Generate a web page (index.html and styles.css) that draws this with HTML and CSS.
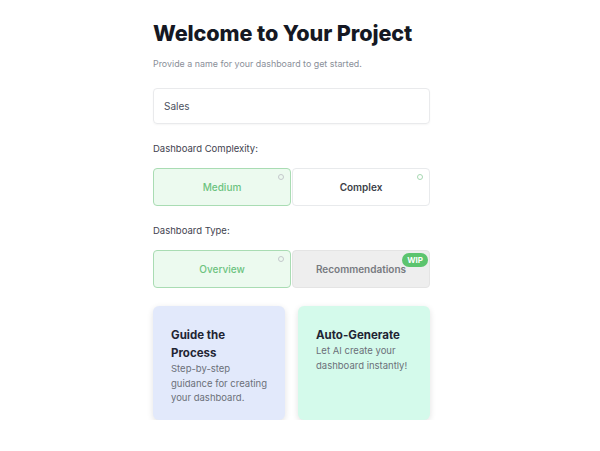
FILE: index.html
```html
<!DOCTYPE html>
<html>
<head>
<meta charset="utf-8">
<link rel="stylesheet" href="styles.css">
</head>
<body>
<main class="wrap">
  <h1 class="title">Welcome to Your Project</h1>
  <p class="subtitle">Provide a name for your dashboard to get started.</p>
  <div class="input">Sales</div>

  <p class="label">Dashboard Complexity:</p>
  <div class="options">
    <div class="opt selected"><span class="dot"></span>Medium</div>
    <div class="opt"><span class="dot green"></span>Complex</div>
  </div>

  <p class="label">Dashboard Type:</p>
  <div class="options">
    <div class="opt selected"><span class="dot"></span>Overview</div>
    <div class="opt disabled"><span class="wip">WIP</span>Recommendations</div>
  </div>

  <div class="cards">
    <div class="card guide">
      <h2 class="card-title">Guide the<br>Process</h2>
      <p class="card-desc">Step-by-step<br>guidance for creating<br>your dashboard.</p>
    </div>
    <div class="card auto">
      <h2 class="card-title">Auto-Generate</h2>
      <p class="card-desc">Let AI create your<br>dashboard instantly!</p>
    </div>
  </div>
</main>
</body>
</html>
```
FILE: styles.css
```css
* { box-sizing: border-box; }
html, body { margin: 0; padding: 0; background: #ffffff; }
body { font-family: "Inter", "Liberation Sans", sans-serif; color: #111827; }

.wrap {
  width: 277px;
  margin-left: 153px;
  padding-top: 19px;
  display: flex;
  flex-direction: column;
}

.title {
  margin: 0;
  font-size: 21.6px;
  font-weight: 800;
  letter-spacing: -0.1px;
  color: #151823;
  line-height: 28px;
}

.subtitle {
  margin: 11px 0 0;
  font-size: 8.9px;
  color: #8a8f99;
  line-height: 12px;
}

.input {
  margin-top: 18px;
  height: 36px;
  border: 1px solid #e9eaec;
  border-radius: 4px;
  padding: 0 10px;
  display: flex;
  align-items: center;
  font-size: 10px;
  color: #4b5060;
  box-shadow: 0 1px 2px rgba(0,0,0,0.04);
}

.label {
  margin: 19px 0 0;
  font-size: 9.5px;
  color: #3f4350;
  line-height: 12px;
}

.options {
  margin-top: 13px;
  display: grid;
  grid-template-columns: 138px 138px;
  gap: 1px;
}

.opt {
  position: relative;
  height: 38px;
  border: 1px solid #e8eaec;
  border-radius: 4px;
  background: #ffffff;
  display: flex;
  align-items: center;
  justify-content: center;
  font-size: 10px;
  font-weight: 600;
  color: #3c3f48;
}

.opt.selected {
  background: #ecfaef;
  border-color: #a9dcb3;
  color: #6cc37f;
  font-weight: 500;
}

.opt.disabled {
  background: #eeeeee;
  border-color: #e4e4e4;
  color: #777a80;
}

.dot {
  position: absolute;
  top: 5px;
  right: 6px;
  width: 6px;
  height: 6px;
  border-radius: 50%;
  border: 1px solid #c4c8cc;
}
.dot.green { border-color: #a7d8b2; }

.wip {
  position: absolute;
  top: 2px;
  right: 1px;
  background: #5cc46e;
  color: #ffffff;
  font-size: 8px;
  font-weight: 700;
  padding: 2px 5px;
  border-radius: 8px;
  line-height: 10px;
}

.cards {
  margin-top: 18px;
  display: grid;
  grid-template-columns: 132px 132px;
  gap: 13px;
}

.card {
  height: 114px;
  border-radius: 6px;
  padding: 20px 12px 0 18px;
  box-shadow: 0 2px 6px rgba(0,0,0,0.12);
}
.card.guide { background: #e2e9fb; }
.card.auto { background: #d4faeb; padding-top: 20px; }

.card-title {
  margin: 0;
  font-size: 11.5px;
  font-weight: 700;
  color: #1f2433;
  line-height: 18px;
}

.card-desc {
  margin: 0;
  font-size: 9.5px;
  color: #6b7079;
  line-height: 14.5px;
}
```
